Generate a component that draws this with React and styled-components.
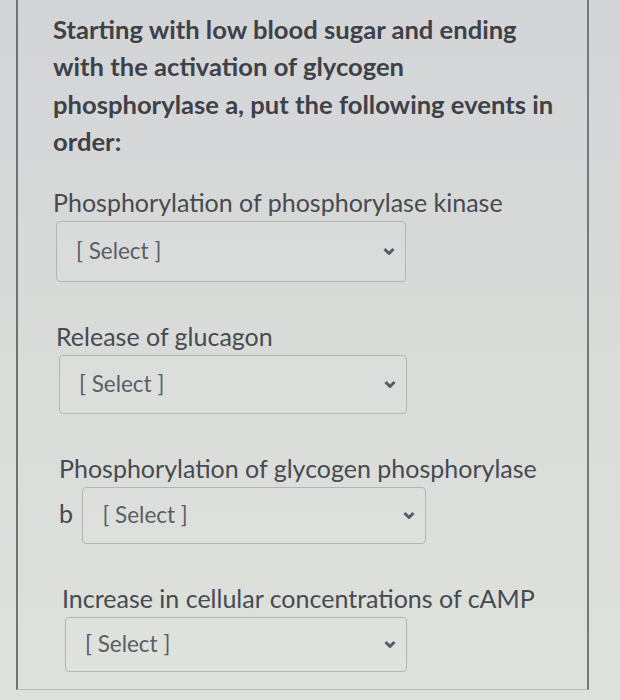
import React from 'react';
import styled, { createGlobalStyle } from 'styled-components';

const GlobalStyle = createGlobalStyle`
  html, body {
    margin: 0;
    padding: 0;
  }
  body {
    background: linear-gradient(180deg, #d3d4d7 0%, #d9dbd9 45%, #dde1db 100%);
    font-family: Lato, "Open Sans", Arial, sans-serif;
    color: #43464d;
    min-height: 700px;
    overflow: hidden;
  }
`;

const Panel = styled.div`
  margin-left: 16px;
  width: 573px;
  height: 690px;
  box-sizing: border-box;
  border-left: 2px solid #6f7277;
  border-right: 2px solid #75787c;
  border-bottom: 1px solid #b9bdb9;
  padding: 11px 0 0 35px;
`;

const Prompt = styled.p`
  margin: 0;
  width: 508px;
  font-size: 25.6px;
  font-weight: 700;
  line-height: 37.3px;
  color: #3e4148;
`;

const Events = styled.div`
  margin-top: 23px;
  width: 492px;
`;

const Event = styled.div`
  font-size: 25px;
  line-height: 38px;
  color: #474a51;
  padding-left: ${p => p.$shift || 0}px;
  margin-bottom: ${p => p.$gap ?? 35}px;
`;

const SelectBox = styled.span`
  display: inline-flex;
  align-items: center;
  justify-content: space-between;
  box-sizing: border-box;
  width: ${p => p.$width || 350}px;
  height: ${p => p.$height || 60}px;
  margin-left: 3px;
  padding: 0 10px 0 19px;
  border: 1px solid #b1b5b6;
  border-radius: 4px;
  background: rgba(255, 255, 255, 0.06);
  vertical-align: baseline;
  cursor: pointer;
`;

const Placeholder = styled.span`
  font-size: 22.5px;
  line-height: 1;
  color: #5a5e67;
`;

const Chevron = () => (
  <svg width="12" height="9" viewBox="0 0 12 9" aria-hidden="true">
    <path d="M1.5 2 L6 6.5 L10.5 2" fill="none" stroke="#565b68" strokeWidth="3" strokeLinejoin="round" />
  </svg>
);

const Dropdown = ({ width, height }) => (
  <SelectBox $width={width} $height={height} role="combobox">
    <Placeholder>[ Select ]</Placeholder>
    <Chevron />
  </SelectBox>
);

const events = [
  { text: 'Phosphorylation of phosphorylase kinase', shift: 0, width: 350, height: 61 },
  { text: 'Release of glucagon', shift: 3, width: 348, height: 59 },
  { text: 'Phosphorylation of glycogen phosphorylase b', shift: 6, width: 344, height: 57 },
  { text: 'Increase in cellular concentrations of cAMP', shift: 9, width: 342, height: 55 },
];

export default function App() {
  return (
    <>
      <GlobalStyle />
      <Panel>
        <Prompt>
          Starting with low blood sugar and ending with the activation of glycogen
          phosphorylase a, put the following events in order:
        </Prompt>
        <Events>
          {events.map(ev => (
            <Event key={ev.text} $shift={ev.shift}>
              {ev.text} <Dropdown width={ev.width} height={ev.height} />
            </Event>
          ))}
        </Events>
      </Panel>
    </>
  );
}
